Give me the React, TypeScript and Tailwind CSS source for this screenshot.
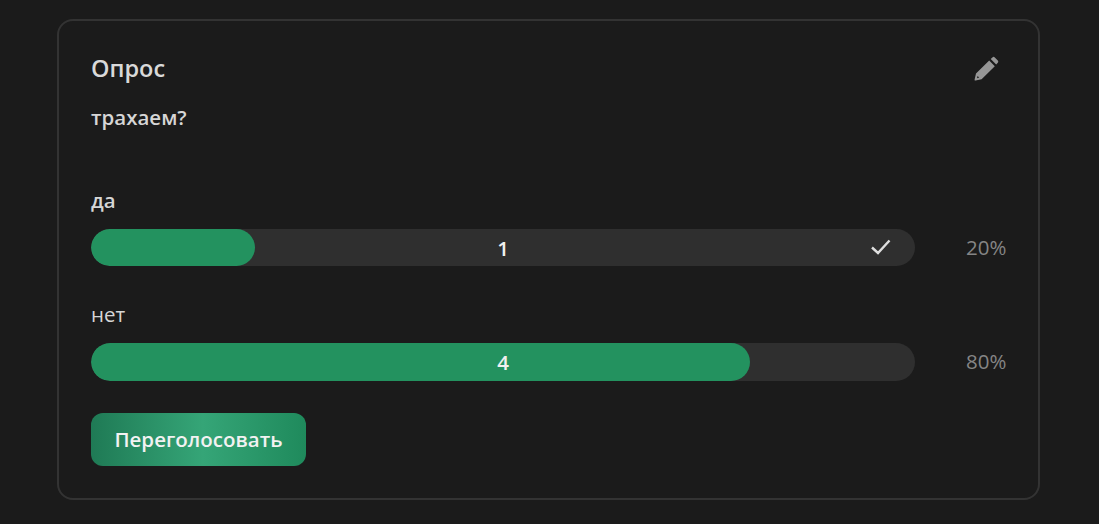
import React from "react";

function Row({ label, count, pct, width, bold, check, barHeight }: { label: string; count: number; pct: string; width: number; bold?: boolean; check?: boolean; barHeight: string }) {
  return (
    <div className="flex flex-col">
      <div className={`text-[20.5px] leading-[27px] text-[#d6d6d6] ${bold ? "font-semibold" : "font-normal"}`}>{label}</div>
      <div className="mt-[15px] flex items-center">
        <div className={`relative flex w-[824px] shrink-0 items-center justify-center overflow-hidden rounded-full bg-[#2f2f2f] ${barHeight}`}>
          <div className="absolute inset-y-0 left-0 rounded-full bg-[#23925f]" style={{ width }} />
          <span className="relative pt-[1px] text-[20.5px] font-semibold text-[#f0f0f0]">{count}</span>
          {check && (
            <svg className="absolute right-[23px] top-[8px]" width="22" height="20" viewBox="0 0 22 20" fill="none" stroke="#dedede" strokeWidth="2.4">
              <path d="M2 10.5 L8 16 L19.5 3.5" />
            </svg>
          )}
        </div>
        <div className="ml-[51px] pb-[1px] text-[20.5px] text-[#858585]">{pct}</div>
      </div>
    </div>
  );
}

export default function App() {
  return (
    <div className="h-[524px] w-[1099px] overflow-hidden bg-[#1b1b1b] pl-[57px] pt-[19px] font-['Open_Sans',sans-serif]">
      <div className="flex h-[481px] w-[983px] flex-col rounded-[16px] border-2 border-[#333333] px-[32px] pt-[29px]">
        <div className="flex items-center justify-between">
          <div className="text-[23.5px] font-semibold leading-[36px] text-[#d9d9d9]">Опрос</div>
          <svg className="mr-[7px]" width="25" height="25" viewBox="0 0 25 25" fill="#969696">
            <path fillRule="evenodd" d="M15.2 4.6 L20.8 10.2 L7.6 23.2 L1.6 24.6 Q0.4 24.7 0.6 23.4 L2 17.6 Z M3.6 20 L3 22.2 L5.2 21.6 Z" />
            <path d="M16.7 3.1 L18.4 1.4 Q19.6 0.3 20.8 1.4 L23.8 4.4 Q24.9 5.6 23.8 6.8 L22.2 8.6 Z" />
          </svg>
        </div>
        <div className="mt-[18px] text-[20.5px] font-semibold leading-[27px] text-[#d6d6d6]">трахаем?</div>
        <div className="mt-[56px] flex flex-col gap-[35px]">
          <Row label="да" count={1} pct="20%" width={164} bold check barHeight="h-[37px]" />
          <Row label="нет" count={4} pct="80%" width={659} barHeight="h-[38px]" />
        </div>
        <button className="mt-[32px] flex h-[53px] w-[215px] items-center justify-center rounded-[12px] bg-[linear-gradient(90deg,#1f7a55_0%,#35a577_52%,#1f8a5c_100%)] text-[20.5px] font-semibold text-[#f2f2f2]">
          Переголосовать
        </button>
      </div>
    </div>
  );
}
